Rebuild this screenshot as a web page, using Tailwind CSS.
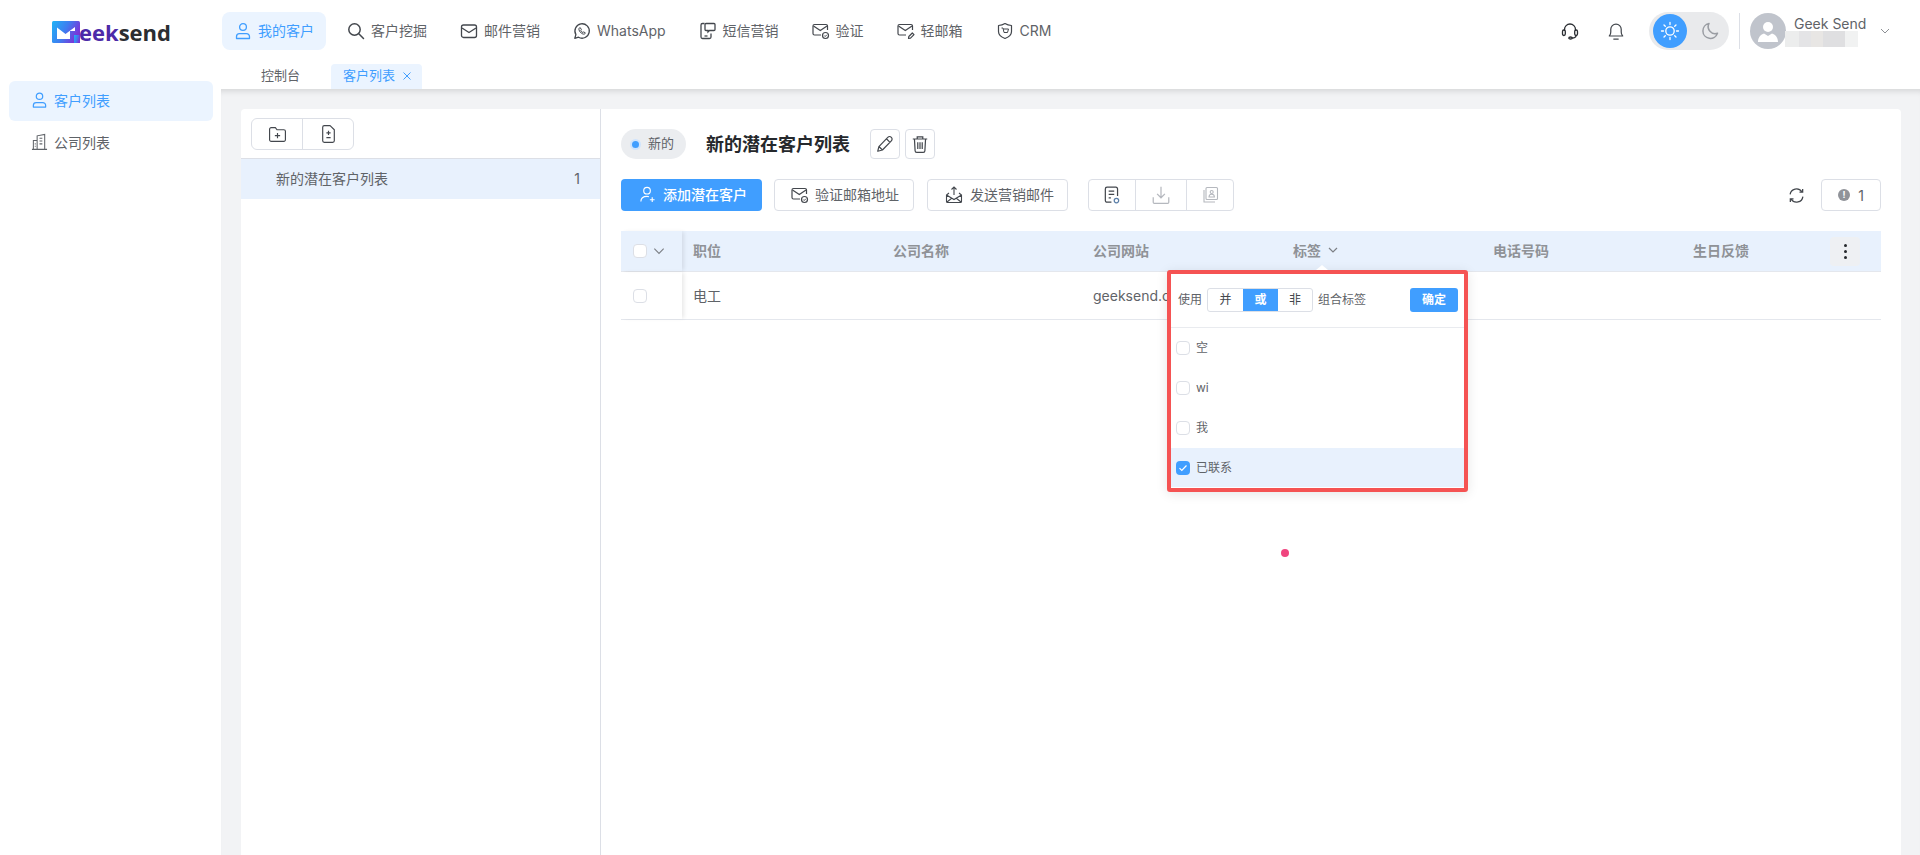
<!DOCTYPE html>
<html lang="en">
<head>
    <meta charset="UTF-8">
    <title>Geeksend</title>
    <script src="https://cdn.jsdelivr.net/npm/@tailwindcss/browser@4"></script>
</head>
<body class="h-[855px] overflow-hidden bg-white text-[14px] text-[#5f6368] font-['Inter','Noto_Sans_CJK_SC',sans-serif]">

    <!-- top bar -->
    <header class="h-[64px] flex items-start pt-3 bg-white">
        <div class="w-[222px] shrink-0 pl-[52px] pt-[8px] flex items-center">
            <svg width="28" height="23" viewBox="0 0 28 23" class="shrink-0">
                <defs><linearGradient id="lg" x1="0" y1="0" x2="1" y2="0.4"><stop offset="0" stop-color="#1fb4f6"/><stop offset="0.55" stop-color="#3f7df0"/><stop offset="1" stop-color="#7a35d8"/></linearGradient></defs>
                <rect width="28" height="22" rx="1.500" fill="url(#lg)"/>
                <path d="M5 6.500 L13.500 13 L23 6 V10 H18 V18 H5 Z" fill="#fff"/>
                <path d="M22 14h6v8h-6z" fill="url(#lg)"/>
            </svg>
            <span class="text-[22px] leading-[24px] font-bold font-['Open_Sans',sans-serif] text-[#4c2aa8] -ml-px">eek<span class="text-[#2b2d31]">send</span></span>
        </div>
        <nav class="flex items-center gap-[9px] text-[#5f6368]">
            <a class="h-[38px] px-3 pb-px flex items-center gap-[6px] rounded-lg bg-[#ebf4ff] text-[#409eff]">
                <svg width="18" height="18" viewBox="0 0 18 18" fill="none" stroke="currentColor" stroke-width="1.300"><circle cx="9" cy="5" r="3.400"/><path d="M2.500 16.500v-1.800a3 3 0 0 1 3-3h7a3 3 0 0 1 3 3v1.800z" stroke-linejoin="round"/></svg>
                <span>我的客户</span>
            </a>
            <a class="h-[38px] px-3 pb-px flex items-center gap-[6px]">
                <svg width="18" height="18" viewBox="0 0 18 18" fill="none" stroke="#43474d" stroke-width="1.500"><circle cx="7.500" cy="7.500" r="5.700"/><path d="M11.800 11.800l4.700 4.700" stroke-linecap="round"/></svg>
                <span>客户挖掘</span>
            </a>
            <a class="h-[38px] px-3 pb-px flex items-center gap-[6px]">
                <svg width="18" height="18" viewBox="0 0 18 18" fill="none" stroke="#43474d" stroke-width="1.300"><rect x="1.500" y="3" width="15" height="12.500" rx="2"/><path d="M2 6l7 4.500L16 6"/></svg>
                <span>邮件营销</span>
            </a>
            <a class="h-[38px] px-3 pb-px flex items-center gap-[6px]">
                <svg width="18" height="18" viewBox="0 0 18 18" fill="none" stroke="#43474d" stroke-width="1.300"><path d="M1.800 16.300l1.100-3.700a7.200 7.200 0 1 1 2.600 2.600z" stroke-linejoin="round"/><path d="M6.500 5.800c-.8.700-.8 1.900 0 3.200.9 1.500 2.300 2.800 3.800 3.100 1 .2 1.800-.3 2.100-1.200l-1.700-1-.8.700c-.9-.4-1.700-1.300-2.100-2.100l.6-.8-1-1.900z" stroke-width="1"/></svg>
                <span>WhatsApp</span>
            </a>
            <a class="h-[38px] px-3 pb-px flex items-center gap-[6px]">
                <svg width="18" height="18" viewBox="0 0 18 18" fill="none" stroke="#43474d" stroke-width="1.300"><path d="M5.500 1.500H3.500a1.500 1.500 0 0 0-1.500 1.500v12a1.500 1.500 0 0 0 1.500 1.500h7a1.500 1.500 0 0 0 1.500-1.500v-3.500"/><path d="M8 1.500h7a1 1 0 0 1 1 1v5a1 1 0 0 1-1 1h-4.500l-1.500 1.500v-1.500h-2a1 1 0 0 1-1-1v-5a1 1 0 0 1 1-1z"/><path d="M5.500 14h3"/></svg>
                <span>短信营销</span>
            </a>
            <a class="h-[38px] px-3 pb-px flex items-center gap-[6px]">
                <svg width="18" height="18" viewBox="0 0 18 18" fill="none" stroke="#43474d" stroke-width="1.200"><path d="M15.500 8V4a1.500 1.500 0 0 0-1.500-1.500H2.500A1.500 1.500 0 0 0 1 4v7.500A1.500 1.500 0 0 0 2.500 13H9"/><path d="M1.500 4l6.800 4.500L15 4"/><circle cx="13.500" cy="13.500" r="3"/><path d="M12.200 13.500l1 1 1.600-1.700" stroke-width="1"/></svg>
                <span>验证</span>
            </a>
            <a class="h-[38px] px-3 pb-px flex items-center gap-[6px]">
                <svg width="18" height="18" viewBox="0 0 18 18" fill="none" stroke="#43474d" stroke-width="1.200"><path d="M15.500 8V4a1.500 1.500 0 0 0-1.500-1.500H2.500A1.500 1.500 0 0 0 1 4v7.500A1.500 1.500 0 0 0 2.500 13H9"/><path d="M1.500 4l6.800 4.500L15 4"/><path d="M11.500 16.500l.3-2 3.500-3.500 1.700 1.700-3.500 3.500z" stroke-linejoin="round"/></svg>
                <span>轻邮箱</span>
            </a>
            <a class="h-[38px] px-3 pb-px flex items-center gap-[6px]">
                <svg width="18" height="18" viewBox="0 0 18 18" fill="none" stroke="#43474d" stroke-width="1.200"><path d="M9 1.500c2 1.200 4 1.800 6.500 2v6c0 3.200-2.500 5.500-6.500 7-4-1.500-6.500-3.800-6.500-7v-6c2.500-.2 4.500-.8 6.500-2z" stroke-linejoin="round"/><path d="M5.500 6h1.500l1 4.500h3.500l1-3.500H7.300" stroke-width="1"/></svg>
                <span>CRM</span>
            </a>
        </nav>
        <div class="ml-auto flex items-center h-[38px] pr-[29px]">
            <svg width="18" height="18" viewBox="0 0 18 18" fill="none" stroke="#2b2e33" stroke-width="1.300" class="mr-[27px]"><path d="M3.500 9V7.500a5.500 5.500 0 0 1 11 0V9"/><rect x="1.500" y="8" width="2.800" height="5.500" rx="1.400"/><rect x="13.700" y="8" width="2.800" height="5.500" rx="1.400"/><path d="M15 13.500c0 1.500-1.500 2.500-4 2.500"/><ellipse cx="9.500" cy="16" rx="1.700" ry="1"/></svg>
            <svg width="20" height="20" viewBox="0 0 18 18" fill="none" stroke="#43474d" stroke-width="1.100" class="mr-[23px]"><path d="M3 13.500c1-1 1.300-2 1.300-3.500V7.500a4.700 4.700 0 0 1 9.400 0V10c0 1.500.3 2.500 1.300 3.500z" stroke-linejoin="round"/><path d="M7 16.300h4" stroke-linecap="round"/></svg>
            <div class="w-[80px] h-[38px] rounded-full bg-[#e9eaec] flex items-center pl-1">
                <span class="w-[34px] h-[34px] rounded-full bg-[#409eff] flex items-center justify-center">
                    <svg width="22" height="22" viewBox="0 0 22 22" fill="none" stroke="#fff" stroke-width="1.300" stroke-linecap="round"><circle cx="11" cy="11" r="4.200"/><path d="M11 2.500v2M11 17.500v2M2.500 11h2M17.500 11h2M5 5l1.300 1.300M15.700 15.700L17 17M5 17l1.300-1.300M15.700 6.300L17 5"/></svg>
                </span>
                <svg width="20" height="20" viewBox="0 0 20 20" fill="none" stroke="#9a9da3" stroke-width="1.500" class="ml-[13px]"><path d="M9 2.500a7.500 7.500 0 1 0 8.500 9.800A7 7 0 0 1 9 2.500z" stroke-linejoin="round"/></svg>
            </div>
            <span class="w-px h-[36px] bg-[#dcdfe6] ml-[10px] mr-[10px]"></span>
            <span class="w-[36px] h-[36px] rounded-full bg-[#c0c4cc] flex items-center justify-center shrink-0 overflow-hidden">
                <svg width="24" height="24" viewBox="0 0 24 24" fill="#fff"><circle cx="12" cy="8" r="5"/><path d="M2 23c0-5 3-7.500 6-8.500l4 2.500 4-2.500c3 1 6 3.500 6 8.500z"/></svg>
            </span>
            <div class="w-[85px] ml-2 relative h-[36px] shrink-0">
                <div class="text-[14px] leading-[20px] mt-[1px] whitespace-nowrap">Geek Send</div>
                <div class="flex absolute left-[-9px] top-[18px] h-[16px]">
                    <span class="w-[14px] bg-[#eceded]"></span><span class="w-[12px] bg-[#e4e4e6]"></span><span class="w-[12px] bg-[#e8e6e4]"></span><span class="w-[22px] bg-[#dfdfe1]"></span><span class="w-[13px] bg-[#f1f2f2]"></span>
                </div>
            </div>
            <svg width="12" height="12" viewBox="0 0 12 12" fill="none" stroke="#8d9095" stroke-width="1"><path d="M2 4l4 4 4-4"/></svg>
        </div>
    </header>

    <div class="flex h-[791px]">
        <!-- sidebar -->
        <aside class="w-[221px] shrink-0 bg-white pt-[17px] pl-[9px] pr-2 flex flex-col gap-px">
            <a class="h-10 pb-[2px] rounded-md bg-[#ebf4ff] text-[#409eff] flex items-center pl-[22px] gap-[6px]">
                <svg width="17" height="18" viewBox="0 0 18 18" fill="none" stroke="currentColor" stroke-width="1.300"><circle cx="9" cy="5" r="3.400"/><path d="M2.500 16.500v-1.800a3 3 0 0 1 3-3h7a3 3 0 0 1 3 3v1.800z" stroke-linejoin="round"/></svg>
                <span>客户列表</span>
            </a>
            <a class="h-10 flex items-center pl-[22px] gap-[6px]">
                <svg width="17" height="18" viewBox="0 0 18 18" fill="none" stroke="#5f6368" stroke-width="1.100"><path d="M6.500 16.500V2.500l8-1.500v15.500M1 16.800h16M6.500 7.500h-4v9M9 5h3M9 8h3M9 11h3M4 11h1M4 13.500h1"/></svg>
                <span>公司列表</span>
            </a>
        </aside>

        <div class="flex-1 min-w-0 flex flex-col">
            <!-- tabs -->
            <div class="h-[25px] bg-white flex items-stretch">
                <a class="pl-10 pr-[31px] pb-[2px] flex items-center text-[13px] leading-none">控制台</a>
                <a class="w-[91px] rounded-t bg-[#ebf4ff] text-[#409eff] flex items-center pl-3 pb-[2px] gap-[7px] text-[13px] leading-none whitespace-nowrap">
                    客户列表
                    <svg width="10" height="10" viewBox="0 0 10 10" fill="none" stroke="currentColor" stroke-width="1"><path d="M1.500 1.500l7 7M8.500 1.500l-7 7"/></svg>
                </a>
            </div>

            <!-- content -->
            <main class="flex-1 min-h-0 bg-[#f2f3f5] pt-5 pl-5 pr-[19px] shadow-[inset_0_7px_6px_-5px_rgba(0,0,0,0.13)]">
                <div class="h-full bg-white rounded-t flex">
                    <!-- list panel -->
                    <section class="w-[360px] shrink-0 border-r border-[#dcdfe6]">
                        <div class="h-[50px] pt-[9px] pl-[10px] border-b border-[#dcdfe6]">
                            <div class="inline-flex h-[32px] border border-[#dcdfe6] rounded-md">
                                <span class="w-[51px] flex items-center justify-center border-r border-[#dcdfe6]">
                                    <svg width="19" height="19" viewBox="0 0 18 18" fill="none" stroke="#43474d" stroke-width="1.100"><path d="M1.500 4a1.500 1.500 0 0 1 1.500-1.500h4l1.500 2h6.500a1.500 1.500 0 0 1 1.500 1.500v8a1.500 1.500 0 0 1-1.500 1.500H3A1.500 1.500 0 0 1 1.500 14z" stroke-linejoin="round"/><path d="M6.500 10h5M9 7.500v5"/></svg>
                                </span>
                                <span class="w-[50px] flex items-center justify-center">
                                    <svg width="19" height="20" viewBox="0 0 18 18" fill="none" stroke="#43474d" stroke-width="1.100"><path d="M3.500 2.500A1.500 1.500 0 0 1 5 1h5.500l4 4v10.500A1.500 1.500 0 0 1 13 17H5a1.500 1.500 0 0 1-1.500-1.500z" stroke-linejoin="round"/><path d="M7 8h4M9 6v4M7 12.500h4"/></svg>
                                </span>
                            </div>
                        </div>
                        <div class="h-10 pb-[2px] bg-[#e8f1fd] flex items-center justify-between pl-[35px] pr-[20px]">
                            <span>新的潜在客户列表</span>
                            <span>1</span>
                        </div>
                    </section>

                    <!-- customer list -->
                    <section class="flex-1 min-w-0 pl-5 pr-5 pt-5">
                        <div class="flex items-center h-[30px]">
                            <span class="w-[65px] h-[30px] rounded-full bg-[#ebedf0] flex items-center pl-[9px] text-[13px]">
                                <span class="w-[11px] h-[11px] rounded-full bg-[#cfe4fd] flex items-center justify-center mr-[7px]"><span class="w-[7px] h-[7px] rounded-full bg-[#409eff]"></span></span>新的
                            </span>
                            <h1 class="ml-5 text-[18px] font-bold text-[#25282c]">新的潜在客户列表</h1>
                            <span class="ml-5 w-[30px] h-[30px] border border-[#dcdfe6] rounded flex items-center justify-center">
                                <svg width="20" height="20" viewBox="0 0 18 18" fill="none" stroke="#43474d" stroke-width="1.100"><path d="M2.500 15.500l1-4.200 8-8.300a1.800 1.800 0 0 1 3.200 3.200l-8 8.200zM10.300 4.300l3.200 3.200M3.500 11.300l3.200 3.100" stroke-linejoin="round"/></svg>
                            </span>
                            <span class="ml-[5px] w-[30px] h-[30px] border border-[#dcdfe6] rounded flex items-center justify-center">
                                <svg width="20" height="20" viewBox="0 0 18 18" fill="none" stroke="#43474d" stroke-width="1.100"><path d="M2.500 4.500h13M6.500 4.500V2.500h5v2M4 4.500l.6 10.500a1.500 1.500 0 0 0 1.500 1.500h5.800a1.500 1.500 0 0 0 1.500-1.500L14 4.500M7 7.500v6M9 7.500v6M11 7.500v6"/></svg>
                            </span>
                        </div>

                        <div class="mt-5 flex items-center h-[32px]">
                            <button class="w-[141px] h-[32px] rounded bg-[#409eff] text-white font-medium flex items-center pl-[18px] pb-px gap-[7px]">
                                <svg width="17" height="17" viewBox="0 0 18 18" fill="none" stroke="#fff" stroke-width="1.200"><circle cx="8.500" cy="5" r="3.500"/><path d="M2 16.500c0-3.500 2.500-5.500 6.500-5.500 1 0 1.500.1 2 .3M11.500 14.500h5M14 12v5"/></svg>
                                <span>添加潜在客户</span>
                            </button>
                            <button class="ml-3 w-[140px] h-[32px] rounded border border-[#dcdfe6] flex items-center pl-4 pb-px gap-[6px]">
                                <svg width="18" height="18" viewBox="0 0 18 18" fill="none" stroke="#43474d" stroke-width="1.200"><path d="M15.500 8V4a1.500 1.500 0 0 0-1.500-1.500H2.500A1.500 1.500 0 0 0 1 4v7.500A1.500 1.500 0 0 0 2.500 13H9"/><path d="M1.500 4l6.800 4.500L15 4"/><circle cx="13.500" cy="13.500" r="3"/><path d="M12.200 13.500l1 1 1.600-1.700" stroke-width="1"/></svg>
                                <span>验证邮箱地址</span>
                            </button>
                            <button class="ml-[13px] w-[141px] h-[32px] rounded border border-[#dcdfe6] flex items-center pl-[17px] pb-px gap-[7px]">
                                <svg width="18" height="19" viewBox="0 0 18 18" fill="none" stroke="#43474d" stroke-width="1.100"><path d="M4 7.500L1.500 9.500v6.500a1 1 0 0 0 1 1h13a1 1 0 0 0 1-1V9.500L14 7.500M1.500 9.500l7.500 4.500 7.500-4.500M2 16.500l5-4M16 16.500l-5-4"/><path d="M9 9.500V1.500M6.500 4L9 1.500 11.500 4"/></svg>
                                <span>发送营销邮件</span>
                            </button>
                            <div class="ml-5 inline-flex h-[32px] border border-[#dcdfe6] rounded">
                                <span class="w-[47px] flex items-center justify-center border-r border-[#dcdfe6]">
                                    <svg width="20" height="20" viewBox="0 0 18 18" fill="none" stroke="#43474d" stroke-width="1.100"><path d="M8.500 15.500H4.500A1.500 1.500 0 0 1 3 14V3.500A1.500 1.500 0 0 1 4.500 2h8A1.500 1.500 0 0 1 14 3.500V10"/><path d="M6 5.500h5M6 8.500h5M6 11.500h2"/><circle cx="13" cy="14" r="2" stroke="#5b7fa8"/></svg>
                                </span>
                                <span class="w-[51px] flex items-center justify-center border-r border-[#dcdfe6]">
                                    <svg width="20" height="20" viewBox="0 0 18 18" fill="none" stroke="#b5b8be" stroke-width="1.100"><path d="M9 1.500v10M5.500 8L9 11.500 12.500 8M2 11v4.500a1 1 0 0 0 1 1h12a1 1 0 0 0 1-1V11"/></svg>
                                </span>
                                <span class="w-[46px] flex items-center justify-center">
                                    <svg width="18" height="18" viewBox="0 0 18 18" fill="none" stroke="#b5b8be" stroke-width="1.100"><rect x="5" y="1.500" width="11.500" height="12" rx="1"/><path d="M3 4v12h11"/><circle cx="10.700" cy="6" r="1.500"/><path d="M8 11c0-2 1.200-2.800 2.700-2.800s2.700.8 2.700 2.800z"/></svg>
                                </span>
                            </div>
                            <svg width="17" height="17" viewBox="0 0 16 16" fill="none" stroke="#43474d" stroke-width="1.200" class="ml-auto"><path d="M2 7a6 6 0 0 1 11-2.500M14 9a6 6 0 0 1-11 2.500"/><path d="M13.800 1.800v3h-3M2.200 14.200v-3h3"/></svg>
                            <span class="ml-4 w-[60px] h-[32px] border border-[#dcdfe6] rounded flex items-center justify-center gap-[8px]">
                                <span class="w-3 h-3 rounded-full bg-[#909399] text-white text-[9px] leading-3 font-bold text-center">!</span>
                                <span>1</span>
                            </span>
                        </div>

                        <!-- table, popover sits on top of it -->
                        <div class="relative mt-5">
                            <div class="flex h-[41px] items-center bg-[#e8f1fd] border-b border-[#e4e7ed] font-semibold text-[#8f9297]">
                                <div class="w-[61px] h-full shrink-0 flex items-center pl-3 gap-[5px] shadow-[3px_0_4px_-1px_rgba(0,0,0,0.09)]">
                                    <span class="w-[14px] h-[14px] bg-white border border-[#dcdfe6] rounded-sm"></span>
                                    <svg width="14" height="14" viewBox="0 0 12 12" fill="none" stroke="#7d8086" stroke-width="1"><path d="M2 4l4 4 4-4"/></svg>
                                </div>
                                <div class="w-[200px] pl-[11px] pb-[2px]">职位</div>
                                <div class="w-[200px] pl-[11px] pb-[2px]">公司名称</div>
                                <div class="w-[200px] pl-[11px] pb-[2px]">公司网站</div>
                                <div class="w-[200px] pl-[11px] pb-[2px] flex items-center gap-[6px]">标签
                                    <svg width="12" height="12" viewBox="0 0 12 12" fill="none" stroke="#7d8086" stroke-width="1.200"><path d="M2 4l4 4 4-4"/></svg>
                                </div>
                                <div class="w-[200px] pl-[11px] pb-[2px]">电话号码</div>
                                <div class="w-[148px] pl-[11px] pb-[2px]">生日反馈</div>
                                <span class="w-[30px] h-[29px] rounded bg-[#eef0f3] flex flex-col items-center justify-center gap-[3px]">
                                    <i class="w-[3px] h-[3px] rounded-full bg-[#25282c]"></i><i class="w-[3px] h-[3px] rounded-full bg-[#25282c]"></i><i class="w-[3px] h-[3px] rounded-full bg-[#25282c]"></i>
                                </span>
                            </div>
                            <div class="flex h-[48px] items-center border-b border-[#e4e7ed]">
                                <div class="w-[61px] h-full shrink-0 flex items-center pl-3 shadow-[3px_0_4px_-1px_rgba(0,0,0,0.09)]">
                                    <span class="w-[14px] h-[14px] bg-white border border-[#dcdfe6] rounded-sm"></span>
                                </div>
                                <div class="w-[200px] pl-[11px] pb-px">电工</div>
                                <div class="w-[200px] pl-[11px]"></div>
                                <div class="w-[85px] pl-[11px] pb-px overflow-hidden whitespace-nowrap">geeksend.com</div>
                            </div>

                            <!-- tag filter popover -->
                            <div class="absolute left-[546px] top-[39px] w-[301px] h-[222px] z-10 bg-white border-4 border-[#f55353] rounded-[3px] text-[12px] shadow-[0_2px_12px_rgba(0,0,0,0.1)]">
                                <span class="absolute left-[145px] top-[-9px] w-0 h-0 border-x-[6px] border-x-transparent border-b-[5px] border-b-white"></span>
                                <div class="h-[54px] flex items-center pl-[7px] pr-[6px] border-b border-[#e9ebef] pb-[12px] pt-[10px]">
                                    <span>使用</span>
                                    <div class="ml-[5px] flex h-6 border border-[#dcdfe6] rounded-[3px] text-[#43474d]">
                                        <span class="w-[35px] flex items-center justify-center">并</span>
                                        <span class="w-[35px] flex items-center justify-center bg-[#409eff] text-white font-bold">或</span>
                                        <span class="w-[34px] flex items-center justify-center">非</span>
                                    </div>
                                    <span class="ml-[5px]">组合标签</span>
                                    <button class="ml-auto w-12 h-6 rounded-[3px] bg-[#409eff] text-white font-bold">确定</button>
                                </div>
                                <div class="h-10 flex items-center pl-[5px] gap-[6px]"><span class="w-[14px] h-[14px] border border-[#dcdfe6] rounded-sm"></span>空</div>
                                <div class="h-10 flex items-center pl-[5px] gap-[6px]"><span class="w-[14px] h-[14px] border border-[#dcdfe6] rounded-sm"></span>wi</div>
                                <div class="h-10 flex items-center pl-[5px] gap-[6px]"><span class="w-[14px] h-[14px] border border-[#dcdfe6] rounded-sm"></span>我</div>
                                <div class="h-[39px] flex items-center pl-[5px] gap-[6px] bg-[#e8f1fd]">
                                    <span class="w-[14px] h-[14px] rounded-sm bg-[#409eff] flex items-center justify-center">
                                        <svg width="10" height="10" viewBox="0 0 10 10" fill="none" stroke="#fff" stroke-width="1.200"><path d="M1.500 5.200l2.300 2.300 4.700-5"/></svg>
                                    </span>
                                    已联系
                                </div>
                            </div>

                            <!-- cursor dot -->
                            <span class="absolute left-[660px] top-[318px] w-2 h-2 rounded-full bg-[#f0457f]"></span>
                        </div>
                    </section>
                </div>
            </main>
        </div>
    </div>
</body>
</html>
